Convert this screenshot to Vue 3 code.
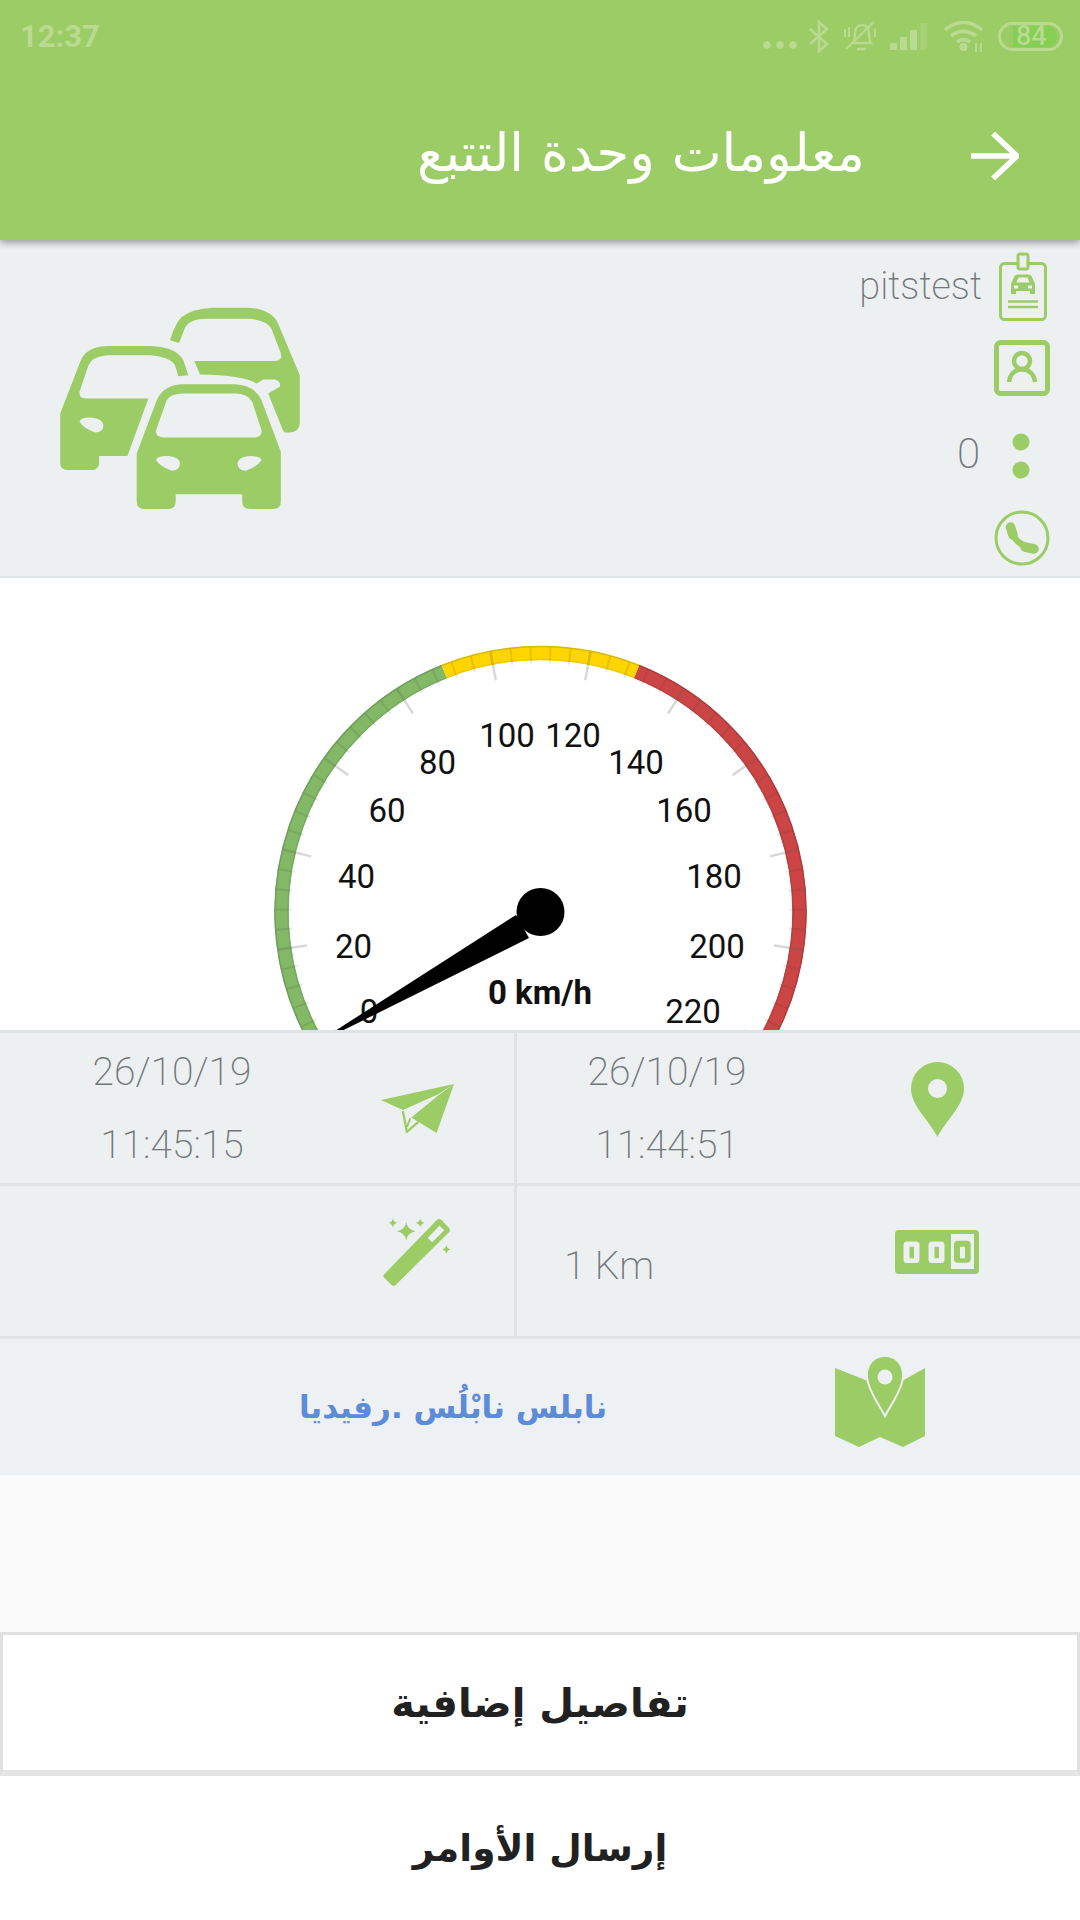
<script setup>
const cx = 540.5
const cy = 912
const pt = (deg, r) => {
  const a = ((deg - 90) * Math.PI) / 180
  return [cx + r * Math.cos(a), cy + r * Math.sin(a)]
}
const ang = (s) => -120 + (s * 240) / 220
const arc = (s1, s2, r) => {
  const [x1, y1] = pt(ang(s1), r)
  const [x2, y2] = pt(ang(s2), r)
  return `M${x1.toFixed(2)} ${y1.toFixed(2)}A${r} ${r} 0 0 1 ${x2.toFixed(2)} ${y2.toFixed(2)}`
}
const seg = [
  { d: arc(0, 90, 259), c: '#82b866' },
  { d: arc(90, 130, 259), c: '#ffd500' },
  { d: arc(130, 220, 259), c: '#cc4545' }
]
const edges = [
  { d: arc(0, 90, 265.5), c: '#729f5c' },
  { d: arc(90, 130, 265.5), c: '#dcb900' },
  { d: arc(130, 220, 265.5), c: '#ae3d3d' },
  { d: arc(0, 90, 252.5), c: '#79ab60' },
  { d: arc(90, 130, 252.5), c: '#f0ca00' },
  { d: arc(130, 220, 252.5), c: '#bb4040' }
]
const line = (s, r1, r2) => {
  const [x1, y1] = pt(ang(s), r1)
  const [x2, y2] = pt(ang(s), r2)
  return { x1: x1.toFixed(2), y1: y1.toFixed(2), x2: x2.toFixed(2), y2: y2.toFixed(2) }
}
const minor = []
const major = []
for (let s = 0; s <= 220; s += 4) {
  if (s % 20 === 0) major.push(line(s, 265, 236))
  else minor.push(line(s, 265, 249))
}
const labels = [
  { t: '0', x: 369, y: 1011.7 }, { t: '20', x: 353.6, y: 946 }, { t: '40', x: 356.5, y: 876 },
  { t: '60', x: 387, y: 810 }, { t: '80', x: 437.6, y: 762.7 }, { t: '100', x: 507, y: 735 },
  { t: '120', x: 573, y: 735 }, { t: '140', x: 636, y: 762.7 }, { t: '160', x: 684, y: 810 },
  { t: '180', x: 714, y: 876 }, { t: '200', x: 717, y: 946 }, { t: '220', x: 693, y: 1011.7 }
]
</script>

<template>
  <div class="page">
    <header class="top">
      <div class="status">
        <span class="clock">12:37</span>
        <div class="status-icons">
          <svg class="dots3" viewBox="0 0 34 8"><circle cx="4" cy="4" r="3.8"/><circle cx="17" cy="4" r="3.8"/><circle cx="30" cy="4" r="3.8"/></svg>
          <svg class="bt" viewBox="0 0 20 33"><path d="M1 9l17 15-8 7V2l8 7L1 24" fill="none" stroke-width="2.6"/></svg>
          <svg class="bell" viewBox="0 0 35 30"><path d="M10 22c2-3 2-6 2-10 0-5 3-8 7-8s7 3 7 8c0 4 0 7 2 10z M14 28H23" fill="none" stroke-width="2.4"/><path d="M3 28L31 1" fill="none" stroke-width="2.4"/><path d="M2 8v8M6 6v10M32 8v8" fill="none" stroke-width="2"/></svg>
          <svg class="signal" viewBox="0 0 38 27"><rect x="0" y="20" width="7" height="7" rx="1"/><rect x="10" y="14" width="7" height="13" rx="1"/><rect x="20" y="7" width="7" height="20" rx="1"/><rect x="30" y="0" width="7" height="27" rx="1" opacity=".4"/></svg>
          <svg class="wifi" viewBox="0 0 39 31"><path d="M1 9c11-10 26-10 37 0M7 15c8-6 17-6 25 0M13 21c4-3 9-3 13 0" fill="none" stroke-width="3.6"/><circle cx="19.500" cy="26" r="3.800"/><path d="M32 22v9M37 22v9" fill="none" stroke-width="2"/></svg>
          <div class="batt"><div class="batt-fill"><span>84</span></div></div>
        </div>
      </div>
      <div class="bar">
        <h1 class="title">معلومات وحدة التتبع</h1>
        <svg class="back" viewBox="0 0 48 48"><path d="M0 24H45M22 1.500L46 24 22 46.500" fill="none" stroke="#fff" stroke-width="5.500"/></svg>
      </div>
    </header>

    <section class="info">
      <svg class="cars" viewBox="180 200 720 610">
        <path fill-rule="evenodd" d="M180 520L240 365Q255 320 320 317H450Q530 320 550 360L565 405L535 408L525 375Q510 350 450 345H320Q275 350 265 375L238 455Q235 473 255 475H445L382 648H297V670Q295 690 275 690H205Q180 690 180 670Z M238 545Q240 532 268 532Q308 534 310 556Q308 577 285 577Q250 565 238 545Z"/>
        <path d="M510 300Q525 250 545 230Q575 205 640 202H740Q815 205 835 250L900 405V550Q898 575 870 577H855Q850 575 845 560L805 460L840 440Q845 425 825 418H790L770 430Q730 405 600 403L583 362H825Q850 360 843 340L815 265Q800 240 750 235H620Q570 235 555 262L537 308Z"/>
        <path fill-rule="evenodd" d="M410 640L470 480Q490 435 545 432H705Q765 435 785 480L843 635V785Q843 807 820 807H750Q727 807 727 785V763H527V785Q527 807 505 807H432Q410 807 410 785Z M500 480Q510 462 545 460H710Q745 462 757 485L785 570Q788 590 765 592H490Q465 590 468 570Z M468 660Q470 648 500 648Q540 650 540 672Q538 692 515 692Q480 680 468 660Z M785 660Q783 648 753 648Q713 650 713 672Q715 692 738 692Q773 680 785 660Z"/>
      </svg>
      <div class="facts">
        <div class="fact f1">
          <span class="thin">pitstest</span>
          <svg class="badge" viewBox="0 0 50 70"><rect x="2.500" y="11.500" width="45" height="56" rx="4" fill="none" stroke-width="3"/><rect x="20" y="2" width="10" height="15" rx="2" fill="#ecf0f1" stroke-width="3"/><path class="solid" fill-rule="evenodd" d="M13 32L16.500 24Q17.500 22.500 20 22.500H30Q32.500 22.500 33.500 24L37 32V42H32V39H18V42H13ZM18.500 30.500H31.500L29.500 25.500H20.500ZM16 33.500V36.500H20V33.500ZM30 33.500V36.500H34V33.500Z"/><path d="M10 49.500H40M10 55H40" fill="none" stroke-width="2.600"/></svg>
        </div>
        <div class="fact f2">
          <svg class="person" viewBox="0 0 56 56"><rect x="2.500" y="2.500" width="51" height="51" rx="4" fill="none" stroke-width="5"/><circle cx="28" cy="21" r="8" fill="none" stroke-width="4.500"/><path d="M15 42c2-17 24-17 26 0" fill="none" stroke-width="4.500"/></svg>
        </div>
        <div class="fact f3">
          <span class="thin zero">0</span>
          <svg class="two" viewBox="0 0 18 46"><circle cx="9" cy="9" r="8.500"/><circle cx="9" cy="37" r="8.500"/></svg>
        </div>
        <div class="fact f4">
          <svg class="phone" viewBox="0 0 56 56"><circle cx="28" cy="28" r="26" fill="none" stroke-width="3"/><path d="M17 18C18 28 27 37 39 38" fill="none" stroke-width="6.500" stroke-linecap="round"/><path d="M16.500 17L19 25M31 37L40 39" fill="none" stroke-width="9.500" stroke-linecap="round"/></svg>
        </div>
      </div>
    </section>

    <section class="gauge">
      <svg class="dial" width="1080" height="452" viewBox="0 578 1080 452">
        <path v-for="s in seg" :key="s.c" :d="s.d" :stroke="s.c" stroke-width="14" fill="none"/>
        <path v-for="(e, i) in edges" :key="i" :d="e.d" :stroke="e.c" stroke-width="1.500" fill="none"/>
        <line v-for="(m, i) in minor" :key="'m' + i" v-bind="m" stroke="rgba(60,60,60,.13)" stroke-width="2"/>
        <line v-for="(m, i) in major" :key="'j' + i" v-bind="m" stroke="rgba(90,90,90,.24)" stroke-width="2.500"/>
        <text v-for="l in labels" :key="l.t" class="num" :x="l.x" :y="l.y" text-anchor="middle" dominant-baseline="central">{{ l.t }}</text>
        <text class="speed" x="540" y="1004" text-anchor="middle">0 km/h</text>
        <polygon points="516,915 529,938 311.500,1046" fill="#000"/>
        <circle :cx="cx" :cy="cy" r="24" fill="#000"/>
      </svg>
    </section>

    <section class="grid">
      <div class="cell left">
        <div class="col-text"><p>26/10/19</p><p>11:45:15</p></div>
        <div class="col-icon">
          <svg class="plane" viewBox="35 38 217 145"><path d="M35 85L252 38 205 68 100 115Z"/><path d="M252 38L200 183 125 137 205 72Z"/><path d="M100 118L112 180 146 150" fill="none" stroke="#9ccc65" stroke-width="7"/><path d="M112 165L122 140" fill="none" stroke="#9ccc65" stroke-width="6"/></svg>
        </div>
      </div>
      <div class="cell right">
        <div class="col-text"><p>26/10/19</p><p>11:44:51</p></div>
        <div class="col-icon">
          <svg class="pin" viewBox="0 0 53 75"><path fill-rule="evenodd" d="M26.500 75C18 58 0 44 0 26.500A26.500 26.500 0 0 1 53 26.500C53 44 35 58 26.500 75ZM26.500 17A9.500 9.500 0 1 0 26.500 36A9.500 9.500 0 1 0 26.500 17Z"/></svg>
        </div>
      </div>
      <div class="cell left">
        <div class="col-text"></div>
        <div class="col-icon">
          <svg class="wand" viewBox="35 25 205 205"><path fill-rule="evenodd" d="M38 195L198 30Q205 25 212 32L234 55Q240 62 234 68L74 226Q66 232 60 226L38 204Q34 199 38 195Z M170 85L205 48 220 62 183 98Z"/><path d="M105 37Q108 60 133 65 108 70 105 93 102 70 77 65 102 60 105 37Z M65 26Q67 38 78 40 67 42 65 54 63 42 52 40 63 38 65 26Z M147 26Q149 38 160 40 149 42 147 54 145 42 134 40 145 38 147 26Z M226 106Q228 118 239 120 228 122 226 134 224 122 213 120 224 118 226 106Z"/></svg>
        </div>
      </div>
      <div class="cell right">
        <div class="col-text km"><p>1 Km</p></div>
        <div class="col-icon">
          <svg class="odo" viewBox="0 0 85 45"><path fill-rule="evenodd" d="M4 0H80Q84 0 84 4V40Q84 44 80 44H4Q0 44 0 40V4Q0 0 4 0Z"/><path class="digit" fill-rule="evenodd" d="M8.500 15Q8.500 11.500 12 11.500H21Q24.500 11.500 24.500 15V29.500Q24.500 33 21 33H12Q8.500 33 8.500 29.500ZM14.500 16.700V28.300H19V16.700Z"/><path class="digit" fill-rule="evenodd" d="M33.500 15Q33.500 11.500 37 11.500H46Q49.500 11.500 49.500 15V29.500Q49.500 33 46 33H37Q33.500 33 33.500 29.500ZM39.500 16.700V28.300H44V16.700Z"/><path class="digit" fill-rule="evenodd" d="M56 4H79V39H56ZM59 14.500V29Q59 32.700 63 32.700H72Q75.700 32.700 75.700 29V14.500Q75.700 10.700 72 10.700H63Q59 10.700 59 14.500Z"/><rect class="digit" x="65" y="16.700" width="5" height="11.600"/></svg>
        </div>
      </div>
    </section>

    <section class="place">
      <div class="addr">نابلس نابْلُس .رفيديا</div>
      <div class="place-icon">
        <svg class="mapico" viewBox="0 0 90 91"><path d="M0 11L33 24H67L90 11V79L68 90 45 80 24 90 0 79Z"/><path class="mpin" d="M50 0C62 0 68 10 67 20 66 32 56 46 50 57 44 46 34 32 33 20 32 10 38 0 50 0Z"/><circle class="mhole" cx="50" cy="20" r="7.500"/></svg>
      </div>
    </section>

    <div class="spacer"></div>

    <div class="btn active">تفاصيل إضافية</div>
    <div class="btn plain">إرسال الأوامر</div>
  </div>
</template>

<style>
html, body { margin: 0; padding: 0; background: #fff; }
</style>

<style scoped>
.page {
  width: 1080px;
  height: 1920px;
  display: flex;
  flex-direction: column;
  overflow: hidden;
  font-family: "Roboto", "DejaVu Sans", sans-serif;
  background: #fff;
}
.top {
  height: 240px;
  background: #9ccc65;
  box-shadow: 0 3px 7px rgba(0, 0, 0, .35);
  position: relative;
  z-index: 2;
  flex: none;
}
.status {
  height: 72px;
  display: flex;
  align-items: center;
  justify-content: space-between;
  padding: 0 17px 0 20px;
  color: #b8da91;
  fill: #b8da91;
  stroke: #b8da91;
}
.clock { font: 700 31px "Roboto", sans-serif; stroke: none; }
.status-icons { display: flex; align-items: center; }
.status-icons svg { display: block; }
.dots3 { width: 34px; height: 8px; margin-top: 18px; stroke: none; }
.bt { width: 20px; height: 33px; margin-left: 12px; fill: none; }
.bell { width: 35px; height: 30px; margin-left: 14px; fill: none; }
.signal { width: 38px; height: 27px; margin-left: 12px; stroke: none; }
.wifi { width: 39px; height: 31px; margin-left: 16px; }
.batt {
  width: 65px;
  height: 29px;
  box-sizing: border-box;
  margin-left: 15px;
  border: 3px solid #b8da91;
  border-radius: 15px;
  padding: 1px 3px 1px 12px;
  display: flex;
}
.batt-fill {
  flex: 1;
  background: #86cf55;
  border-radius: 0 10px 10px 0;
  display: flex;
  align-items: center;
  padding-left: 3px;
}
.batt span { font: 500 27px "Roboto", sans-serif; line-height: 21px; }
.bar {
  height: 168px;
  display: flex;
  align-items: center;
  justify-content: flex-end;
  padding: 0 61px 0 0;
}
.title {
  margin: 0 106px 8px 0;
  font: 400 53px "DejaVu Sans", sans-serif;
  color: #fff;
}
.back { width: 48px; height: 48px; display: block; }

.info {
  height: 338px;
  flex: none;
  box-sizing: border-box;
  background: #ecf0f1;
  border-bottom: 2px solid #e2e5e7;
  display: flex;
  justify-content: space-between;
  align-items: flex-start;
  padding: 67px 28px 0 60px;
}
.cars { width: 240px; height: 203px; fill: #9ccc65; display: block; }
.facts {
  margin-top: -67px;
  display: flex;
  flex-direction: column;
  align-items: flex-end;
  fill: #9ccc65;
  stroke: #9ccc65;
}
.fact { display: flex; align-items: center; justify-content: flex-end; }
.thin {
  font: 200 38px "Roboto", sans-serif;
  color: #72777a;
}
.solid { stroke: none; fill: #9ccc65; }
.f1 { height: 90px; padding-top: 4px; box-sizing: border-box; }
.f1 .thin { margin-right: 16px; margin-bottom: 2px; }
.badge { width: 50px; height: 70px; margin-right: 4px; }
.f2 { height: 76px; }
.person { width: 56px; height: 56px; margin-right: 2px; }
.f3 { height: 100px; }
.zero { font-size: 42px; margin-right: 32px; margin-bottom: 6px; }
.two { width: 18px; height: 46px; stroke: none; margin-right: 22px; }
.f4 { height: 64px; }
.phone { width: 56px; height: 56px; margin-right: 2px; }

.gauge { height: 452px; flex: none; background: #fff; overflow: hidden; }
.dial { display: block; }
.num { font: 400 33px "Roboto", sans-serif; fill: #111; }
.speed { font: 700 33px "Roboto", sans-serif; fill: #111; }

.grid {
  flex: none;
  display: grid;
  grid-template-columns: 517px 563px;
  grid-auto-rows: 153px;
  background: #ecf0f1;
  border-top: 3px solid #dfe3e5;
}
.cell {
  display: flex;
  align-items: stretch;
  box-sizing: border-box;
  border-bottom: 3px solid #dfe3e5;
}
.cell.left { border-right: 3px solid #dfe3e5; }
.cell.left .col-text { width: 344px; flex: none; }
.cell.left .col-icon { width: 146px; flex: none; }
.cell.right .col-text { width: 300px; flex: none; }
.cell.right .col-icon { width: 240px; flex: none; }
.col-text {
  display: flex;
  flex-direction: column;
  align-items: center;
  justify-content: center;
  gap: 27px;
}
.col-text p {
  margin: 0;
  font: 200 39px/46px "Roboto", sans-serif;
  color: #72777a;
}
.col-text.km { align-items: flex-start; padding: 10px 0 0 47px; box-sizing: border-box; }
.col-icon { display: flex; align-items: center; justify-content: center; fill: #9ccc65; }
.col-icon svg { display: block; }
.plane { width: 73px; height: 49px; }
.pin { width: 53px; height: 75px; margin-bottom: 17px; }
.wand { width: 68px; height: 68px; margin-bottom: 18px; }
.odo { width: 85px; height: 45px; margin-bottom: 17px; }
.digit { fill: #ecf0f1; }

.place {
  height: 136px;
  flex: none;
  background: #eef1f3;
  display: flex;
  align-items: center;
}
.addr {
  width: 726px;
  padding-left: 180px;
  box-sizing: border-box;
  text-align: center;
  direction: rtl;
  font: 700 31px "DejaVu Sans", sans-serif;
  color: #5b8bd9;
}
.place-icon { width: 90px; margin-left: 109px; margin-bottom: 10px; fill: #9ccc65; }
.mapico { width: 90px; height: 91px; display: block; }
.mpin { stroke: #eef1f3; stroke-width: 4; paint-order: stroke; }
.mhole { fill: #eef1f3; }

.spacer { flex: none; height: 157px; background: #fafafa; }
.btn {
  flex: none;
  display: flex;
  align-items: center;
  justify-content: center;
  box-sizing: border-box;
  font: 700 38px "DejaVu Sans", sans-serif;
  color: #212121;
  direction: rtl;
}
.btn.active {
  height: 144px;
  font-size: 40px;
  background: #fff;
  border: 3px solid #e0e0e0;
  border-bottom-width: 6px;
  border-bottom-color: #e4e4e4;
}
.btn.plain { height: 144px; font-size: 37.5px; background: #fff; }
</style>
